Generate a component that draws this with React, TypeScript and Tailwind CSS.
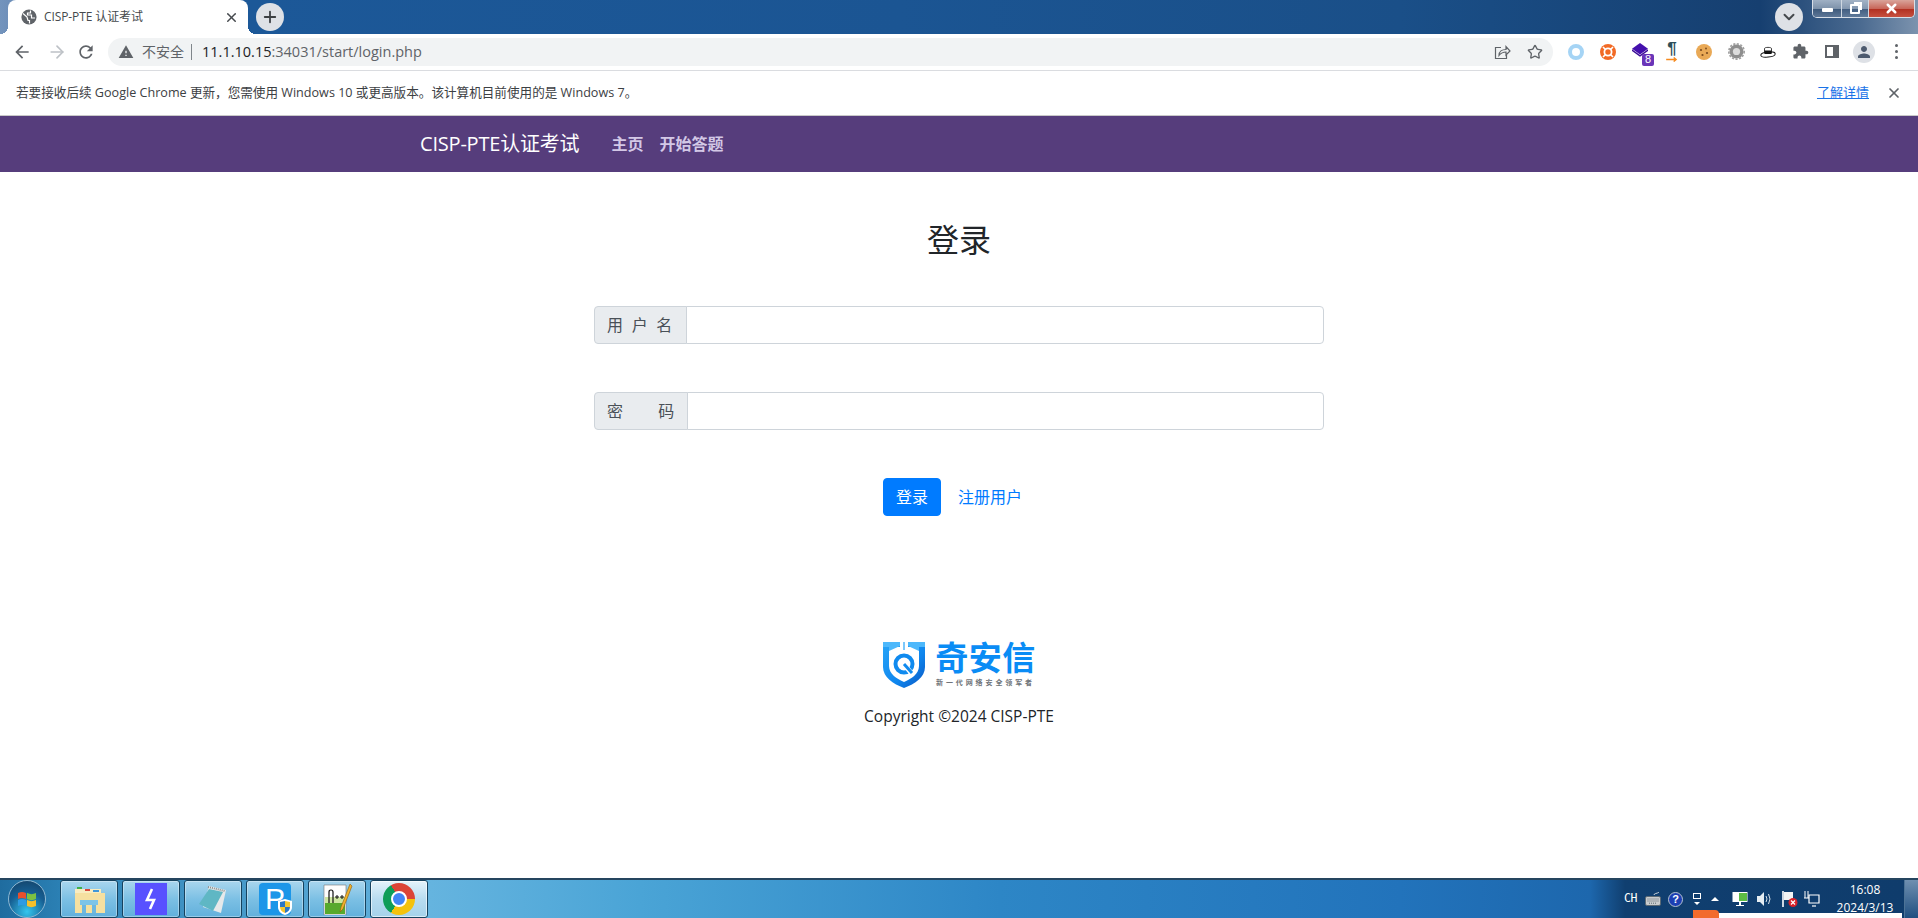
import { X, Plus, ChevronDown, ArrowRight, Star } from "lucide-react";

const Mi = ({ d, className }: { d: string; className?: string }) => (
  <svg viewBox="0 0 24 24" className={className} fill="currentColor">
    <path d={d} />
  </svg>
);

const icons = {
  back: "M20 11H7.83l5.59-5.59L12 4l-8 8 8 8 1.41-1.41L7.83 13H20v-2z",
  reload:
    "M17.65 6.35C16.2 4.9 14.21 4 12 4c-4.42 0-7.99 3.58-7.99 8s3.57 8 7.99 8c3.73 0 6.84-2.55 7.73-6h-2.08c-.82 2.33-3.04 4-5.65 4-3.31 0-6-2.69-6-6s2.69-6 6-6c1.66 0 3.14.69 4.22 1.78L13 11h7V4l-2.35 2.35z",
  warning: "M1 21h22L12 2 1 21zm12-3h-2v-2h2v2zm0-4h-2v-4h2v4z",
  puzzle:
    "M20.5 11H19V7c0-1.1-.9-2-2-2h-4V3.5C13 2.12 11.88 1 10.5 1S8 2.12 8 3.5V5H4c-1.1 0-1.99.9-1.99 2v3.8H3.5c1.49 0 2.7 1.21 2.7 2.7s-1.21 2.7-2.7 2.7H2V20c0 1.1.9 2 2 2h3.8v-1.5c0-1.49 1.21-2.7 2.7-2.7 1.49 0 2.7 1.21 2.7 2.7V22H17c1.1 0 2-.9 2-2v-4h1.5c1.38 0 2.5-1.12 2.5-2.5S21.88 11 20.5 11z",
  person:
    "M12 12c2.21 0 4-1.79 4-4s-1.79-4-4-4-4 1.79-4 4 1.79 4 4 4zm0 2c-2.67 0-8 1.34-8 4v2h16v-2c0-2.66-5.33-4-8-4z",
};

const TabGlobe = () => (
  <svg viewBox="0 0 16 16" className="h-4 w-4">
    <circle cx="8" cy="8" r="7.6" fill="#5f6368" />
    <path d="M2 4.5l4 3.5 1 3.5h1.5v3M9.5 1.5v2.5h-3v2h4v3h3.5" fill="none" stroke="#fff" strokeWidth="1.2" />
  </svg>
);

const TitleBar = () => (
  <div className="flex h-[34px] shrink-0 bg-[linear-gradient(90deg,#7394bd_0px,#6f90ba_8px,#1c5898_248px,#1b5593_900px,#1a4f88_1400px,#163f70_1760px,#4a6a90_1860px,#7c93ae_1918px)]">
    <div className="relative ml-2 flex h-[34px] w-[240px] items-center rounded-t-lg bg-white pl-[13px] pr-[9px]">
      <div className="absolute bottom-0 -left-2 h-2 w-2 bg-[radial-gradient(circle_at_0_0,transparent_8px,white_8px)]" />
      <div className="absolute -right-2 bottom-0 h-2 w-2 bg-[radial-gradient(circle_at_100%_0,transparent_8px,white_8px)]" />
      <TabGlobe />
      <span className="ml-[7px] flex-1 truncate text-[12px] tracking-[-0.1px] text-[#45494d]">CISP-PTE 认证考试</span>
      <X className="h-[15px] w-[15px] text-[#45494d]" strokeWidth={2.4} />
    </div>
    <div className="ml-2 mt-[3px] flex h-7 w-7 items-center justify-center rounded-full bg-[#dee1e6]">
      <Plus className="h-[18px] w-[18px] text-[#3c4043]" strokeWidth={2.4} />
    </div>
    <div className="flex-1" />
    <div className="mt-[3px] flex h-7 w-7 items-center justify-center rounded-full bg-[#dee1e6]">
      <ChevronDown className="h-[18px] w-[18px] text-[#45494d]" strokeWidth={2.6} />
    </div>
    <div className="ml-[9px] mr-[3px] flex h-[18px] w-[103px] overflow-hidden rounded-b-[5px] border border-t-0 border-[#d8dfe8]">
      <div className="flex w-[29px] items-center justify-center border-r border-[#cfd8e2] bg-[linear-gradient(180deg,#9fb0c4,#7e93ab_50%,#3e5a7c_55%,#5d7797)]">
        <div className="mt-[2px] h-[4px] w-[11px] rounded-[1px] bg-white" />
      </div>
      <div className="flex w-[27px] items-center justify-center border-r border-[#cfd8e2] bg-[linear-gradient(180deg,#a3b3c6,#8498b0_50%,#435f82_55%,#607a9a)]">
        <div className="relative h-[10px] w-[10px] rounded-[1px] border-2 border-white">
          <div className="absolute -right-[4px] -top-[4px] -z-0 h-[8px] w-[8px] border-r-2 border-t-2 border-white" />
        </div>
      </div>
      <div className="flex flex-1 items-center justify-center bg-[linear-gradient(180deg,#d9a49a,#c8675a_50%,#b23122_55%,#c7503f)]">
        <X className="h-[15px] w-[15px] text-white" strokeWidth={4} />
      </div>
    </div>
  </div>
);

const ToolbarIcon = ({ children }: { children: React.ReactNode }) => (
  <div className="flex h-9 w-8 items-center justify-center">{children}</div>
);

const Toolbar = () => (
  <div className="flex h-[37px] shrink-0 items-center border-b border-[#dadce0] bg-white pb-[1px]">
    <div className="flex w-[108px] items-center pl-[12px]">
      <Mi d={icons.back} className="h-5 w-5 text-[#5f6368]" />
      <ArrowRight className="ml-[15px] h-5 w-5 text-[#bdc1c6]" strokeWidth={2} />
      <Mi d={icons.reload} className="ml-[9px] h-5 w-5 text-[#5f6368]" />
    </div>
    <div className="flex h-7 w-[1445px] items-center rounded-full bg-[#f1f3f4] pl-[10px]">
      <Mi d={icons.warning} className="h-4 w-4 text-[#5f6368]" />
      <span className="ml-[8px] text-[14px] text-[#5f6368]">不安全</span>
      <div className="ml-[7px] h-[16px] w-px bg-[#80868b]" />
      <span className="ml-[10px] text-[14.5px] text-[#202124]">
        11.1.10.15<span className="text-[#5f6368]">:34031/start/login.php</span>
      </span>
      <div className="flex-1" />
      <svg viewBox="0 0 18 18" className="mr-[16px] h-[18px] w-[18px]" fill="none" stroke="#5f6368" strokeWidth="1.2">
        <path d="M8 4.5H2.5v11h11V12" />
        <path d="M6 12.5c0-4 3-6 7-6V3.5l4 4.5-4 4V9c-3 0-5 1-7 3.5z" />
      </svg>
      <Star className="mr-[10px] h-[16px] w-[16px] text-[#5f6368]" strokeWidth={2} />
    </div>
    <div className="ml-[7px] flex">
      <ToolbarIcon>
        <div className="h-4 w-4 rounded-full border-[4px] border-[#a5d4f5]" />
      </ToolbarIcon>
      <ToolbarIcon>
        <svg viewBox="0 0 16 16" className="h-4 w-4">
          <circle cx="8" cy="8" r="8" fill="#f26a25" />
          <circle cx="8" cy="8" r="3.6" fill="none" stroke="#fff" strokeWidth="1.8" />
          <path d="M3 3l2.5 2.5M13 3l-2.5 2.5M3 13l2.5-2.5M13 13l-2.5-2.5" stroke="#fff" strokeWidth="1.6" />
        </svg>
      </ToolbarIcon>
      <ToolbarIcon>
        <div className="relative h-4 w-4">
          <svg viewBox="1 1 14 13" className="absolute -top-[1px] left-0 h-[15px] w-4">
            <path d="M8 1l7 5-7 5-7-5z" fill="#4410ad" />
            <path d="M1 8l7 5 7-5v-1.5l-7 5-7-5z" fill="#3a0c96" />
          </svg>
          <div className="absolute -bottom-[6px] -right-[6px] flex h-3 w-3 items-center justify-center rounded-[2px] bg-[#6a35b8] font-['Liberation_Sans',sans-serif] text-[11px] leading-none text-white">
            8
          </div>
        </div>
      </ToolbarIcon>
      <ToolbarIcon>
        <div className="flex h-5 w-4 flex-col items-center">
          <span className="font-['Liberation_Sans',sans-serif] text-[17px] font-bold leading-[14px] text-[#2c4f5a]">¶</span>
          <svg viewBox="0 0 14 6" className="mt-[1px] h-[6px] w-[14px]">
            <path d="M0 3h12M9 0.5l3 2.5-3 2.5" stroke="#f58a1f" strokeWidth="1.6" fill="none" />
          </svg>
        </div>
      </ToolbarIcon>
      <ToolbarIcon>
        <svg viewBox="0 0 16 16" className="h-4 w-4">
          <circle cx="8" cy="8" r="8" fill="#e9a956" />
          <circle cx="5" cy="6" r="1.1" fill="#7a4a1e" />
          <circle cx="10" cy="4.5" r="0.9" fill="#7a4a1e" />
          <circle cx="11" cy="9" r="1.1" fill="#7a4a1e" />
          <circle cx="6.5" cy="11" r="1.1" fill="#7a4a1e" />
        </svg>
      </ToolbarIcon>
      <ToolbarIcon>
        <svg viewBox="0 0 16 16" className="h-[17px] w-[17px]">
          <circle cx="8" cy="8" r="6.5" fill="#8e8e8e" />
          <circle cx="8" cy="8" r="7.2" fill="none" stroke="#a0a0a0" strokeWidth="1.6" strokeDasharray="2 1.4" />
          <circle cx="8" cy="8" r="3.4" fill="#dcdcdc" />
        </svg>
      </ToolbarIcon>
      <ToolbarIcon>
        <svg viewBox="0 0 16 12" className="h-3 w-4">
          <ellipse cx="8" cy="8.5" rx="7.2" ry="2.6" fill="#fff" stroke="#111" strokeWidth="1" transform="rotate(-6 8 8.5)" />
          <path d="M4.5 7V2.5C4.5 1 11.5 1 11.5 2.5V7z" fill="#fff" stroke="#111" strokeWidth="0.8" />
          <path d="M4.5 4.5h7V8h-7z" fill="#111" />
        </svg>
      </ToolbarIcon>
      <ToolbarIcon>
        <Mi d={icons.puzzle} className="h-[17px] w-[17px] text-[#5f6368]" />
      </ToolbarIcon>
      <ToolbarIcon>
        <div className="h-[13px] w-[14px] border-2 border-r-[6px] border-[#5f6368]" />
      </ToolbarIcon>
      <ToolbarIcon>
        <div className="flex h-[22px] w-[22px] items-center justify-center rounded-full bg-[#dee1e6]">
          <Mi d={icons.person} className="h-[18px] w-[18px] text-[#4d5a6e]" />
        </div>
      </ToolbarIcon>
      <ToolbarIcon>
        <div className="flex flex-col gap-[3px]">
          <div className="h-[3px] w-[3px] rounded-full bg-[#5f6368]" />
          <div className="h-[3px] w-[3px] rounded-full bg-[#5f6368]" />
          <div className="h-[3px] w-[3px] rounded-full bg-[#5f6368]" />
        </div>
      </ToolbarIcon>
    </div>
  </div>
);

const InfoBar = () => (
  <div className="flex h-[45px] shrink-0 items-center border-b border-[#c9c9c9] bg-white pl-[16px] pr-[16px] text-[12.6px] text-[#3c4043]">
    <span className="flex-1">若要接收后续 Google Chrome 更新，您需使用 Windows 10 或更高版本。该计算机目前使用的是 Windows 7。</span>
    <a className="text-[13px] text-[#1a73e8] underline">了解详情</a>
    <X className="ml-[17px] h-[16px] w-[16px] text-[#5f6368]" strokeWidth={2.6} />
  </div>
);

const Navbar = () => (
  <nav className="h-14 shrink-0 bg-[#563d7c]">
    <div className="mx-auto flex h-full w-[1140px] items-center pl-[31px]">
      <a className="text-[20px] tracking-[-0.2px] text-white">CISP-PTE认证考试</a>
      <div className="ml-6 flex">
        <a className="px-2 text-[16px] font-bold text-[#d3c8e6]">主页</a>
        <a className="px-2 text-[16px] font-bold text-[#d3c8e6]">开始答题</a>
      </div>
    </div>
  </nav>
);

const ShieldLogo = () => (
  <svg viewBox="0 0 42 46" className="h-[46px] w-[42px]">
    <defs>
      <linearGradient id="shieldFill" x1="0" y1="0" x2="1" y2="1">
        <stop offset="0" stopColor="#28a5f8" />
        <stop offset="0.6" stopColor="#0f86ee" />
        <stop offset="1" stopColor="#0a55c0" />
      </linearGradient>
    </defs>
    <path d="M0 0H42V25C42 35 32 42 21 46C10 42 0 35 0 25Z" fill="url(#shieldFill)" />
    <path d="M6 5H36V24C36 32 28 37 21 40C14 37 6 32 6 24Z" fill="#fff" />
    <path d="M17 0H25V5H17Z" fill="#fff" />
    <path d="M20 0H22V8H20Z" fill="#7cc8fb" />
    <path d="M0 0H17V4L6 9V5H0Z" fill="#4db8fb" />
    <path d="M42 0H25V4L36 9V5H42Z" fill="#4db8fb" />
    <circle cx="21" cy="22" r="8.5" fill="none" stroke="#0f8aef" strokeWidth="4" />
    <path d="M20 21L29 32" stroke="#fff" strokeWidth="5" />
    <path d="M21 22L29 31" stroke="#0f8aef" strokeWidth="3" />
  </svg>
);

const Main = () => (
  <main className="flex-1 bg-white text-[#212529]">
    <div className="mx-auto flex w-[730px] flex-col items-center pt-[49px]">
      <h2 className="text-[32px] font-normal leading-[38px]">登录</h2>
      <div className="mt-[47px] flex h-[38px] w-full">
        <label className="flex w-[93px] items-center rounded-l-[4px] border border-[#ced4da] bg-[#e9ecef] px-3 text-[16px] text-[#495057] [word-spacing:4.5px]">
          用 户 名
        </label>
        <input className="-ml-px h-full flex-1 rounded-r-[4px] border border-[#ced4da] bg-white px-3 outline-none" />
      </div>
      <div className="mt-[48px] flex h-[38px] w-full">
        <label className="flex w-[94px] items-center rounded-l-[4px] border border-[#ced4da] bg-[#e9ecef] px-3 text-[16px] text-[#495057] [word-spacing:31px]">
          密 码
        </label>
        <input className="-ml-px h-full flex-1 rounded-r-[4px] border border-[#ced4da] bg-white px-3 outline-none" />
      </div>
      <div className="mt-[48px] flex items-center gap-[4px]">
        <button className="h-[38px] rounded-[4px] border border-[#007bff] bg-[#007bff] px-3 text-[16px] text-white">登录</button>
        <a className="px-[13px] text-[16px] text-[#007bff]">注册用户</a>
      </div>
      <div className="mt-[126px] flex h-[46px] items-start">
        <ShieldLogo />
        <div className="ml-[11px] flex w-[99px] flex-col items-center">
          <span className="whitespace-nowrap text-[33px] font-bold leading-[32px] tracking-[0.5px] text-[#0a8cf5]">奇安信</span>
          <span className="mt-[5px] whitespace-nowrap text-[7px] font-bold leading-[8px] tracking-[2.9px] text-[#6f7479]">新一代网络安全领军者</span>
        </div>
      </div>
      <p className="mt-[16px] text-[15.5px] leading-6">Copyright ©2024 CISP-PTE</p>
    </div>
  </main>
);

const TaskButton = ({ children, active }: { children: React.ReactNode; active?: boolean }) => (
  <div
    className={
      active
        ? "flex h-[38px] w-[58px] items-center justify-center rounded-[3px] border border-[#16425e] bg-[linear-gradient(180deg,#e4f3fb,#b8dcf0_50%,#a5d2ea)] shadow-[inset_0_0_0_1px_rgba(255,255,255,0.6)]"
        : "flex h-[38px] w-[58px] items-center justify-center rounded-[3px] border border-[#16425e] bg-[linear-gradient(180deg,#a9d6ee,#7cc0e4_50%,#62b0dc)] shadow-[inset_0_0_0_1px_rgba(255,255,255,0.35)]"
    }
  >
    {children}
  </div>
);

const Taskbar = () => (
  <div className="relative flex h-10 shrink-0 items-center overflow-hidden border-t-2 border-[#25455f] bg-[linear-gradient(90deg,#1f6c9f_0px,#2b80b4_60px,#65b4df_430px,#4aa4d6_640px,#2d86c6_1000px,#2273bb_1400px,#1d67ad_1590px,#103f70_1625px,#0f3c6c_1900px)]">
    <div className="ml-[8px] flex h-[38px] w-[38px] items-center justify-center rounded-full border border-[#8fb8d2] bg-[radial-gradient(circle_at_50%_85%,#35c6ee,#165e92_55%,#143f63)]">
      <svg viewBox="0 0 24 24" className="h-[24px] w-[24px]">
        <path d="M3 6c3-1.5 5-1.5 8 0v6c-3-1.5-5-1.5-8 0z" fill="#e8502d" />
        <path d="M12 6c3 1.5 6 1.5 9 0v6c-3 1.5-6 1.5-9 0z" fill="#7cc142" />
        <path d="M3 13c3-1.5 5-1.5 8 0v6c-3-1.5-5-1.5-8 0z" fill="#2f9be3" />
        <path d="M12 13c3 1.5 6 1.5 9 0v6c-3 1.5-6 1.5-9 0z" fill="#f6c02b" />
      </svg>
    </div>
    <div className="ml-[14px] flex gap-1">
      <TaskButton>
        <svg viewBox="0 0 32 32" className="h-8 w-8">
          <path d="M2 6h26v8H2z" fill="#f8ecc0" />
          <path d="M4 4h5v2H4z" fill="#3fb04a" />
          <path d="M12 6h5v2h-5z" fill="#d9483b" />
          <path d="M20 7h6v2h-6z" fill="#3f97d9" />
          <path d="M2 10h30v20H2z" fill="#f5e0a0" />
          <path d="M7 17h18v5H7z" fill="#7cc4e8" />
          <path d="M9 22h4v8H9zM19 22h4v8h-4z" fill="#6db7df" />
        </svg>
      </TaskButton>
      <TaskButton>
        <div className="flex h-8 w-8 items-center justify-center bg-[#5851ff]">
          <svg viewBox="0 0 32 32" className="h-8 w-8">
            <path d="M17 6l-5 11h7l-4 9" fill="none" stroke="#fff" strokeWidth="2.6" />
          </svg>
        </div>
      </TaskButton>
      <TaskButton>
        <svg viewBox="0 0 32 32" className="h-8 w-8">
          <path d="M12 3l17 4-5 23-18-6z" fill="#e6e9ea" />
          <path d="M11 4L28 8" stroke="#8a8f90" strokeWidth="2" strokeDasharray="1 1" />
          <path d="M12 6l14 3-10 19-14-7z" fill="#5fb7c4" />
        </svg>
      </TaskButton>
      <TaskButton>
        <div className="relative flex h-8 w-8 items-center rounded-[4px] bg-[#1c96e8] pl-[6px] font-['Liberation_Sans',sans-serif] text-[30px] leading-none text-white">
          P
          <svg viewBox="0 0 14 16" className="absolute -right-[1px] bottom-0 h-4 w-[14px]">
            <path d="M7 0l7 2v6c0 4-3 7-7 8-4-1-7-4-7-8V2z" fill="#fff" />
            <path d="M7 2v6H2V3z" fill="#2a76c6" />
            <path d="M7 2l5 1v5H7z" fill="#f3c531" />
            <path d="M2 8h5v6c-3-1-5-3-5-6z" fill="#f3c531" />
            <path d="M7 8h5c0 3-2 5-5 6z" fill="#2a76c6" />
          </svg>
        </div>
      </TaskButton>
      <TaskButton>
        <svg viewBox="0 0 32 32" className="h-8 w-8">
          <path d="M3 2h22v30H3z" fill="#fdfdfd" stroke="#777" strokeWidth="0.6" />
          <path d="M4 20h20v11H4z" fill="#57a92c" />
          <path d="M4 14h20v6H4z" fill="#cde6a0" />
          <path d="M8 20v-11q0-2 2-2t2 2v11" fill="none" stroke="#111" strokeWidth="1.2" />
          <path d="M14 14h4M16 12v4M19 14h4M21 12v4" stroke="#111" strokeWidth="1" />
          <path d="M29 1L20 24l-1 5 3-3L31 3z" fill="#f1b12a" stroke="#8a5a10" strokeWidth="0.6" />
        </svg>
      </TaskButton>
      <TaskButton active>
        <div className="relative flex h-8 w-8 items-center justify-center rounded-full bg-[conic-gradient(#db4437_0deg,#db4437_90deg,#f4c20d_90deg,#f4c20d_210deg,#0f9d58_210deg,#0f9d58_330deg,#db4437_330deg)]">
          <div className="h-[16px] w-[16px] rounded-full border-[2.5px] border-white bg-[#4285f4]" />
        </div>
      </TaskButton>
    </div>
    <div className="flex-1" />
    {/* tray */}
    <div className="flex h-full items-center">
      <span className="w-[13px] whitespace-nowrap font-['DejaVu_Sans_Mono',monospace] text-[11.5px] leading-none tracking-[-0.5px] text-white">CH</span>
      <svg viewBox="0 0 16 14" className="ml-[8px] h-[14px] w-[16px]">
        <path d="M9 3c0-2 3-1 5-3" stroke="#c9d1d8" fill="none" />
        <rect x="0.5" y="4.5" width="15" height="9" rx="1.5" fill="#c9ccce" stroke="#5c6a75" />
        <path d="M2.5 7h11M2.5 9h11M4 11.2h8" stroke="#5c6a75" strokeDasharray="1 1" />
      </svg>
      <div className="ml-[7px] flex h-[15px] w-[15px] items-center justify-center rounded-full border border-[#b5c2cf] bg-[#1c3fb4] font-['Liberation_Sans',sans-serif] text-[11px] font-bold leading-none text-white">
        ?
      </div>
      <div className="ml-[10px] flex w-[8px] flex-col items-center gap-[3px]">
        <div className="h-[6px] w-[8px] border border-white" />
        <div className="h-0 w-0 border-x-[3px] border-t-[3px] border-x-transparent border-t-white" />
      </div>
      <div className="ml-[10px] h-0 w-0 border-x-[4px] border-b-[4px] border-x-transparent border-b-white" />
      <svg viewBox="0 0 16 16" className="ml-[13px] h-4 w-4">
        <rect x="0.5" y="1" width="15" height="10" fill="#fff" />
        <rect x="7" y="2" width="8" height="8" fill="#5cbd45" />
        <path d="M7 11h2v3h3v1H4v-1h3z" fill="#fff" />
      </svg>
      <svg viewBox="0 0 16 16" className="ml-[8px] h-4 w-4">
        <path d="M1 5h3l4-4v14l-4-4H1z" fill="#e6edf2" />
        <path d="M10 5q2 3 0 6M12.5 3q3 5 0 10" stroke="#d5e0e8" fill="none" />
      </svg>
      <svg viewBox="0 0 16 16" className="ml-[10px] h-4 w-4">
        <path d="M1 0v16" stroke="#fff" strokeWidth="1.6" />
        <path d="M2 1h9v8H2z" fill="#f4f4f4" />
        <circle cx="11" cy="11.5" r="4.5" fill="#d8222a" />
        <path d="M9 9.5l4 4M13 9.5l-4 4" stroke="#fff" strokeWidth="1.2" />
      </svg>
      <svg viewBox="0 0 16 16" className="ml-[6px] h-4 w-4">
        <path d="M1 0v7M4 0v7M0 7h5" stroke="#fff" strokeWidth="1" fill="none" />
        <path d="M5 4h10v8H5z" fill="none" stroke="#fff" strokeWidth="1.2" />
        <path d="M8 15h4" stroke="#fff" strokeWidth="1.2" />
      </svg>
      <div className="ml-[6px] flex w-[78px] flex-col items-center text-[12px] leading-[18px] text-white">
        <span>16:08</span>
        <span>2024/3/13</span>
      </div>
      <div className="h-full w-[14px] border-l border-[#4d7396] bg-[linear-gradient(180deg,#6f8fb0,#1f4f80)]" />
    </div>
    {/* ime popup peeking over the tray */}
    <div className="absolute bottom-0 left-[1700px] h-[5px] w-[202px] bg-white" />
    <div className="absolute bottom-0 left-[1693px] h-[8px] w-[26px] rounded-tr-[4px] bg-[#f26b2d]" />
  </div>
);

export default function App() {
  return (
    <div className="flex h-[918px] w-full flex-col overflow-hidden bg-white font-['Open_Sans','Noto_Sans_CJK_SC',sans-serif]">
      <TitleBar />
      <Toolbar />
      <InfoBar />
      <Navbar />
      <Main />
      <Taskbar />
    </div>
  );
}
